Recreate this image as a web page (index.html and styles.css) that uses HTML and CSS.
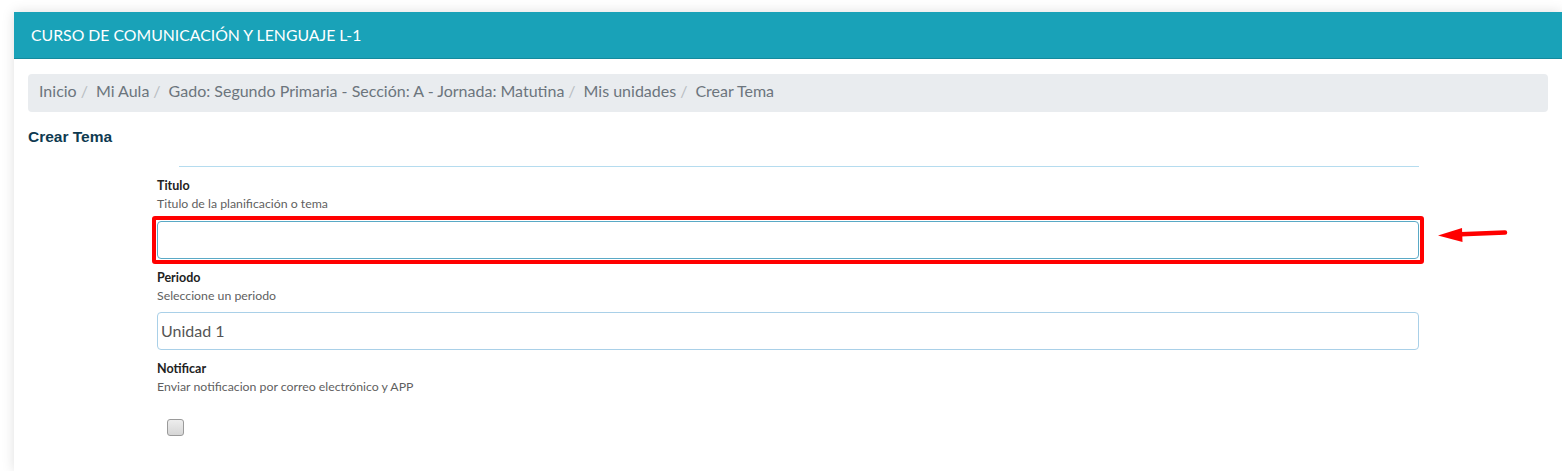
FILE: index.html
```html
<!DOCTYPE html>
<html lang="es">
<head>
<meta charset="utf-8">
<title>Crear Tema</title>
<link rel="stylesheet" href="styles.css">
</head>
<body>
<div class="page">
  <div class="card">
    <div class="card-header">CURSO DE COMUNICACIÓN Y LENGUAJE L-1</div>
    <div class="card-body">
      <nav class="breadcrumb">
        <span class="crumb">Inicio</span><span class="sep">/</span>
        <span class="crumb">Mi Aula</span><span class="sep">/</span>
        <span class="crumb">Gado: Segundo Primaria - Sección: A - Jornada: Matutina</span><span class="sep">/</span>
        <span class="crumb">Mis unidades</span><span class="sep">/</span>
        <span class="crumb">Crear Tema</span>
      </nav>
      <h2 class="title">Crear Tema</h2>
      <form class="form">
        <div class="rule"></div>
        <div class="field">
          <label class="label">Titulo</label>
          <div class="help">Titulo de la planificación o tema</div>
          <div class="input-row">
            <div class="highlight">
              <input class="input" type="text">
            </div>
            <svg class="arrow" width="72" height="20" viewBox="0 0 72 20">
              <path d="M24 9.2 L68 7.6" stroke="#f00" stroke-width="4.5" stroke-linecap="round" fill="none"/>
              <path d="M1 10.5 L25 3 L25.5 17 Z" fill="#f00"/>
            </svg>
          </div>
        </div>
        <div class="field field-periodo">
          <label class="label">Periodo</label>
          <div class="help">Seleccione un periodo</div>
          <div class="select">Unidad 1</div>
        </div>
        <div class="field field-notificar">
          <label class="label">Notificar</label>
          <div class="help">Enviar notificacion por correo electrónico y APP</div>
          <span class="checkbox"></span>
        </div>
      </form>
    </div>
  </div>
</div>
</body>
</html>
```
FILE: styles.css
```css
html, body {
  margin: 0;
  padding: 0;
  background: #ffffff;
  height: 100%;
  overflow: hidden;
}
.page {
  padding: 12px 0 0 14px;
  height: 100%;
  box-sizing: border-box;
}
.card {
  background: #fff;
  height: 100%;
  box-shadow: 0 0 12px rgba(0, 0, 0, 0.13);
}
.card-header {
  height: 47px;
  box-sizing: border-box;
  background: #19a2b8;
  border-bottom: 1px solid #148a9d;
  color: #fff;
  font-family: Lato, "Open Sans", sans-serif;
  font-size: 15.8px;
  line-height: 46px;
  padding-left: 17px;
}
.card-body {
  padding: 15px 14px 0 14px;
}
.breadcrumb {
  height: 38px;
  box-sizing: border-box;
  background: #e9ecef;
  border-radius: 4px;
  display: flex;
  align-items: center;
  padding: 0 0 5px 11px;
  font-family: Lato, "Open Sans", sans-serif;
  font-size: 16px;
  color: #6c757d;
}
.sep {
  color: #b8bdc2;
  padding: 0 8px 0 4px;
}
.title {
  margin: 16px 0 0 0;
  font-family: "Liberation Sans", Arial, sans-serif;
  font-size: 15.5px;
  font-weight: bold;
  line-height: 18px;
  color: #0e3a50;
}
.form {
  margin: 20px 0 0 129px;
  width: 1262px;
  font-family: Lato, "Open Sans", sans-serif;
}
.rule {
  margin-left: 22px;
  height: 1px;
  background: #b5dcef;
}
.field {
  margin-top: 10px;
}
.label {
  display: block;
  font-size: 12.5px;
  font-weight: bold;
  line-height: 18px;
  color: #222;
}
.help {
  font-size: 12.3px;
  line-height: 18px;
  color: #5f5f5f;
}
.input-row {
  position: relative;
  margin-top: 3px;
}
.highlight {
  margin: 0 -5px;
  padding: 1px;
  border: 4px solid #ff0000;
  border-radius: 3px;
}
.input {
  display: block;
  width: 100%;
  height: 38px;
  box-sizing: border-box;
  border: 1px solid #5aa9c6;
  border-radius: 4px;
  background: #fff;
  margin: 0;
}
.arrow {
  position: absolute;
  left: 1280px;
  top: 9px;
}
.field-periodo {
  margin-top: 5px;
}
.select {
  margin-top: 7px;
  height: 38px;
  box-sizing: border-box;
  border: 1px solid #a9d0e8;
  border-radius: 4px;
  padding-left: 3px;
  font-size: 16px;
  line-height: 36px;
  color: #555;
}
.field-notificar {
  margin-top: 10px;
}
.checkbox {
  display: block;
  margin: 23px 0 0 10px;
  width: 17px;
  height: 17px;
  box-sizing: border-box;
  border: 1px solid #9a9a9a;
  border-radius: 3px;
  background: linear-gradient(#ededed, #d6d6d6);
}
```
